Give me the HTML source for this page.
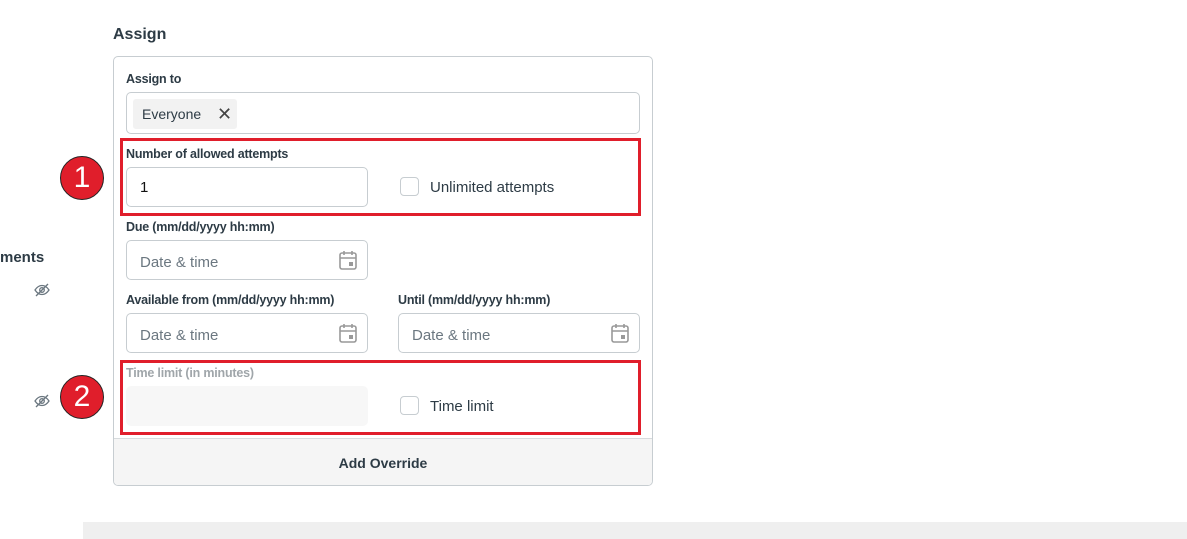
<!DOCTYPE html>
<html><head><style>
body{margin:0;width:1187px;height:539px;background:#fff;position:relative;overflow:hidden;font-family:"Liberation Sans",sans-serif;color:#2d3b45}
.a{position:absolute}
.lbl{font-size:12.5px;font-weight:bold;color:#2d3b45;letter-spacing:-0.2px}
.inp{position:absolute;border:1px solid #c7cdd1;border-radius:5px;background:#fff;box-sizing:border-box}
.ph{position:absolute;left:13px;top:13px;font-size:15px;color:#6b7780}
.cal{position:absolute;right:10px;top:9px}
.cb{position:absolute;width:19px;height:19px;border:1px solid #c7cdd1;border-radius:4px;box-sizing:border-box}
.red{position:absolute;border:3px solid #e01e2b;box-sizing:border-box}
.circ{position:absolute;width:44px;height:44px;border-radius:50%;background:#e01e2b;border:1.5px solid #222;box-sizing:border-box;color:#fff;font-size:30px;text-align:center;line-height:42px}
</style></head><body>
<div class="a" style="left:113px;top:26px;font-size:16px;font-weight:bold">Assign</div>
<div class="a" style="left:0;top:249px;font-size:15px;font-weight:bold">ments</div>
<svg class="a" style="left:34px;top:283px" width="16" height="14" viewBox="0 0 16 14"><path d="M1 7c2-3 4.5-4.5 7-4.5S13 4 15 7c-2 3-4.5 4.5-7 4.5S3 10 1 7z" fill="none" stroke="#6b7780" stroke-width="1.3"/><circle cx="8" cy="7" r="2.3" fill="none" stroke="#6b7780" stroke-width="1.3"/><path d="M2 13L14 1" stroke="#6b7780" stroke-width="1.3"/></svg>
<svg class="a" style="left:34px;top:394px" width="16" height="14" viewBox="0 0 16 14"><path d="M1 7c2-3 4.5-4.5 7-4.5S13 4 15 7c-2 3-4.5 4.5-7 4.5S3 10 1 7z" fill="none" stroke="#6b7780" stroke-width="1.3"/><circle cx="8" cy="7" r="2.3" fill="none" stroke="#6b7780" stroke-width="1.3"/><path d="M2 13L14 1" stroke="#6b7780" stroke-width="1.3"/></svg>
<div class="circ" style="left:60px;top:156px">1</div>
<div class="circ" style="left:60px;top:375px">2</div>

<div class="a" style="left:113px;top:56px;width:540px;height:430px;border:1px solid #c7cdd1;border-radius:5px;box-sizing:border-box;overflow:hidden">
 <div class="a" style="left:0;top:381px;width:100%;height:48px;background:#f5f5f5;border-top:1px solid #d7dbdd;text-align:center;line-height:48px;font-size:14px;font-weight:bold">Add Override</div>
</div>
<div class="a lbl" style="left:126px;top:72px">Assign to</div>
<div class="inp" style="left:126px;top:92px;width:514px;height:42px">
 <div class="a" style="left:6px;top:6px;width:104px;height:30px;background:#f2f2f2;border-radius:3px;font-size:14px;line-height:30px;padding-left:9px;box-sizing:border-box">Everyone<span style="position:absolute;left:84px;font-size:18px;color:#444">✕</span></div>
</div>
<div class="a lbl" style="left:126px;top:147px">Number of allowed attempts</div>
<div class="inp" style="left:126px;top:167px;width:242px;height:40px"><div class="ph" style="color:#111;top:11px">1</div></div>
<div class="cb" style="left:400px;top:177px"></div>
<div class="a" style="left:430px;top:179px;font-size:15px">Unlimited attempts</div>
<div class="a lbl" style="left:126px;top:220px">Due (mm/dd/yyyy hh:mm)</div>
<div class="inp" style="left:126px;top:240px;width:242px;height:40px"><div class="ph">Date &amp; time</div><svg class="cal" width="18" height="20" viewBox="0 0 18 20"><rect x="1" y="3" width="16" height="16" rx="2" fill="none" stroke="#999" stroke-width="1.6"/><path d="M1 8h16M5 1v4M13 1v4" stroke="#999" stroke-width="1.6"/><rect x="10" y="12" width="4" height="4" fill="#999"/></svg></div>
<div class="a lbl" style="left:126px;top:293px">Available from (mm/dd/yyyy hh:mm)</div>
<div class="inp" style="left:126px;top:313px;width:242px;height:40px"><div class="ph">Date &amp; time</div><svg class="cal" width="18" height="20" viewBox="0 0 18 20"><rect x="1" y="3" width="16" height="16" rx="2" fill="none" stroke="#999" stroke-width="1.6"/><path d="M1 8h16M5 1v4M13 1v4" stroke="#999" stroke-width="1.6"/><rect x="10" y="12" width="4" height="4" fill="#999"/></svg></div>
<div class="a lbl" style="left:398px;top:293px">Until (mm/dd/yyyy hh:mm)</div>
<div class="inp" style="left:398px;top:313px;width:242px;height:40px"><div class="ph">Date &amp; time</div><svg class="cal" width="18" height="20" viewBox="0 0 18 20"><rect x="1" y="3" width="16" height="16" rx="2" fill="none" stroke="#999" stroke-width="1.6"/><path d="M1 8h16M5 1v4M13 1v4" stroke="#999" stroke-width="1.6"/><rect x="10" y="12" width="4" height="4" fill="#999"/></svg></div>
<div class="a lbl" style="left:126px;top:366px;color:#a0a6aa">Time limit (in minutes)</div>
<div class="a" style="left:126px;top:386px;width:242px;height:40px;background:#f7f7f7;border-radius:5px"></div>
<div class="cb" style="left:400px;top:396px"></div>
<div class="a" style="left:430px;top:398px;font-size:15px">Time limit</div>
<div class="red" style="left:120px;top:138px;width:521px;height:78px"></div>
<div class="red" style="left:120px;top:360px;width:521px;height:75px"></div>
<div class="a" style="left:83px;top:522px;width:1104px;height:17px;background:#efefef"></div>
</body></html>
